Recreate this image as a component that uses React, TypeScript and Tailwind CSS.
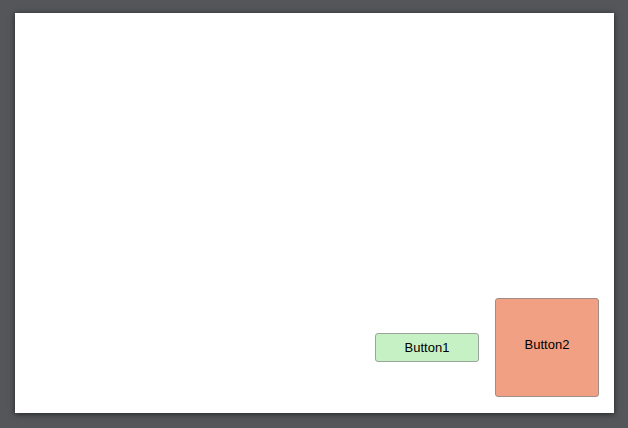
import React from "react";

export default function App() {
  return (
    <div className="w-[628px] h-[428px] bg-[#55565a] pt-[13px] pl-[15px]" style={{ fontFamily: '"Liberation Sans", Arial, sans-serif' }}>
      <div className="w-[599px] h-[400px] bg-white shadow-[0_1px_6px_rgba(0,0,0,0.6)] flex items-end justify-end pr-[15px] pb-[16px]">
        <div className="flex items-center gap-[16px]">
          <div className="w-[104px] h-[29px] rounded-[3px] border border-[#9aa59a] bg-[#c6f1c5] flex items-center justify-center text-[13px] text-black">
            Button1
          </div>
          <div className="w-[104px] h-[99px] rounded-[3px] border border-[#a08e86] bg-[#f1a083] flex items-center justify-center pb-[5px] text-[13px] text-black">
            Button2
          </div>
        </div>
      </div>
    </div>
  );
}
